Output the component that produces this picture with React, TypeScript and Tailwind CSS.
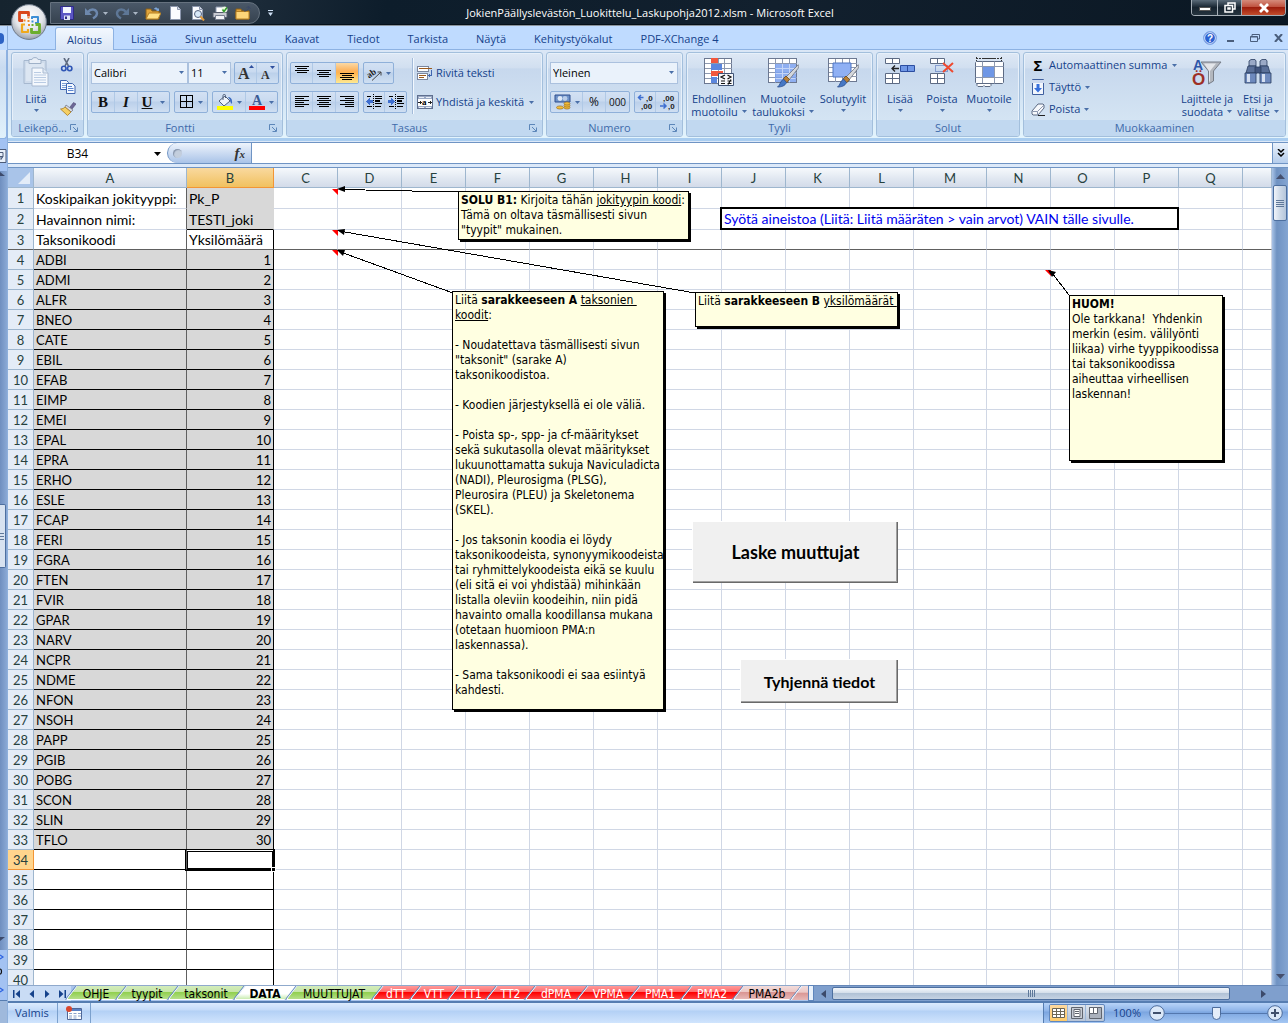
import { useState } from 'react';
import type { ReactNode } from 'react';

const UI_FONT = 'font-["Open_Sans","Noto_Sans",sans-serif]';
const CELL_FONT = 'font-[Lato,"Open_Sans",sans-serif]';
const NOTE_FONT = 'font-["DejaVu_Sans_Condensed","DejaVu_Sans",sans-serif]';

const MENU_TABS = ['Lisää', 'Sivun asettelu', 'Kaavat', 'Tiedot', 'Tarkista', 'Näytä', 'Kehitystyökalut', 'PDF-XChange 4'];

const COLUMNS = [
  { name: 'A', width: 'w-[153px]' },
  { name: 'B', width: 'w-[87px]' },
  { name: 'C', width: 'w-16' },
  { name: 'D', width: 'w-16' },
  { name: 'E', width: 'w-16' },
  { name: 'F', width: 'w-16' },
  { name: 'G', width: 'w-16' },
  { name: 'H', width: 'w-16' },
  { name: 'I', width: 'w-16' },
  { name: 'J', width: 'w-16' },
  { name: 'K', width: 'w-16' },
  { name: 'L', width: 'w-16' },
  { name: 'M', width: 'w-[73px]' },
  { name: 'N', width: 'w-16' },
  { name: 'O', width: 'w-16' },
  { name: 'P', width: 'w-16' },
  { name: 'Q', width: 'w-16' },
  { name: '', width: 'w-auto' },
];

const TAXA = [
  'ADBI', 'ADMI', 'ALFR', 'BNEO', 'CATE', 'EBIL', 'EFAB', 'EIMP', 'EMEI', 'EPAL',
  'EPRA', 'ERHO', 'ESLE', 'FCAP', 'FERI', 'FGRA', 'FTEN', 'FVIR', 'GPAR', 'NARV',
  'NCPR', 'NDME', 'NFON', 'NSOH', 'PAPP', 'PGIB', 'POBG', 'SCON', 'SLIN', 'TFLO',
];

const GREEN = 'bg-[linear-gradient(#d3ecbb,#c5e6a6_45%,#92d050_50%,#b5e08a)] text-black';
const RED = 'bg-[linear-gradient(#ff9a9a,#ff6b6b_45%,#fe0000_50%,#ff4040)] text-white';
const PINK = 'bg-[linear-gradient(#f2dcdb,#ecc8c6_45%,#da9694_50%,#e6b8b7)] text-black';

const SHEETS = [
  { name: 'OHJE', width: 'w-[50px]', look: GREEN },
  { name: 'tyypit', width: 'w-[52px]', look: GREEN },
  { name: 'taksonit', width: 'w-[66px]', look: GREEN },
  { name: 'DATA', width: 'w-[52px]', look: 'bg-[linear-gradient(#ffffff_60%,#c9ecb0)] text-black' },
  { name: 'MUUTTUJAT', width: 'w-[86px]', look: GREEN },
  { name: 'dTT', width: 'w-[38px]', look: RED },
  { name: 'VTT', width: 'w-[38px]', look: RED },
  { name: 'TT1', width: 'w-[38px]', look: RED },
  { name: 'TT2', width: 'w-[39px]', look: RED },
  { name: 'dPMA', width: 'w-[52px]', look: RED },
  { name: 'VPMA', width: 'w-[52px]', look: RED },
  { name: 'PMA1', width: 'w-[52px]', look: RED },
  { name: 'PMA2', width: 'w-[52px]', look: RED },
  { name: 'PMA2b', width: 'w-[58px]', look: PINK },
];

/* ---------- small building blocks ---------- */

function Caret({ className = 'text-[#4a6fa8]' }: { className?: string }) {
  return (
    <svg className={`w-[5px] h-[3px] shrink-0 ${className}`} viewBox="0 0 5 3" fill="currentColor">
      <path d="M0 0h5L2.5 3z" />
    </svg>
  );
}

function Group({ title, width, launcher, children }: { title: string; width: string; launcher?: boolean; children: ReactNode }) {
  return (
    <section
      className={`${width} flex flex-col rounded-[3px] border border-[#a3bfdc] overflow-hidden shadow-[inset_0_0_0_1px_#e7f0fa]
                  bg-[linear-gradient(#dee8f5,#d1dff0_18%,#c7d8ed_19%,#d8e8f5)]`}
    >
      <div className="flex-1 min-h-0">{children}</div>
      <div className="h-4 shrink-0 flex items-center bg-[#c1d8f0] text-[#3e6aaa] text-[11px] leading-4 px-[3px]">
        <h2 className="flex-1 text-center whitespace-nowrap">{title}</h2>
        {launcher && (
          <button aria-label={`${title}: lisää asetuksia`} className="w-2 h-2 mr-[2px]">
            <svg viewBox="0 0 8 8" className="w-2 h-2" fill="none" stroke="#5c86b9">
              <path d="M.5 6V.5H6M3 3l4 4M7.5 3.5v4h-4" />
            </svg>
          </button>
        )}
      </div>
    </section>
  );
}

function ButtonBox({ children, className = '' }: { children: ReactNode; className?: string }) {
  return (
    <div
      className={`flex h-[22px] rounded-[2px] border border-[#8fb0d9] divide-x divide-[#b0c9e6] overflow-hidden
                  bg-[linear-gradient(#d3e1f3,#c9daf0_45%,#bbd0ea_50%,#cfdff2)] ${className}`}
    >
      {children}
    </div>
  );
}

function Tool({ label, width, active, children }: { label: string; width: string; active?: boolean; children: ReactNode }) {
  return (
    <button
      aria-label={label}
      title={label}
      className={`${width} flex items-center justify-center gap-1 ${active ? 'bg-[linear-gradient(#fbd9a5,#fdb159_40%,#ffb54f_50%,#fee992)]' : ''}`}
    >
      {children}
    </button>
  );
}

function BigButton({ lines, width, caretBelow, children }: { lines: string[]; width: string; caretBelow?: boolean; children: ReactNode }) {
  return (
    <button className={`${width} flex flex-col items-center text-[#15428b] text-[11px] leading-[13px] shrink-0`}>
      <span className="h-8 mb-[3px]">{children}</span>
      {lines.map((line, i) => (
        <span key={line} className="flex items-center gap-1 whitespace-nowrap">
          {line}
          {!caretBelow && i === lines.length - 1 && <Caret />}
        </span>
      ))}
      {caretBelow && <span className="mt-1"><Caret /></span>}
    </button>
  );
}

function Lines({ rows }: { rows: [number, number][] }) {
  return (
    <svg className="w-4 h-4" viewBox="0 0 16 16" stroke="#000" shapeRendering="crispEdges">
      {rows.map(([x, w], i) => <path key={i} d={`M${x} ${2.5 + i * 2}h${w}`} />)}
    </svg>
  );
}

function ShortLines({ top }: { top: number }) {
  return (
    <svg className="w-4 h-4" viewBox="0 0 16 16" stroke="#000" shapeRendering="crispEdges">
      <path d={`M1 ${top + 0.5}h14M3 ${top + 2.5}h10M1 ${top + 4.5}h14M3 ${top + 6.5}h10`} />
    </svg>
  );
}

function Indent({ right }: { right?: boolean }) {
  return (
    <svg className="w-4 h-4" viewBox="0 0 16 16" shapeRendering="crispEdges">
      <path d="M7.5 0v16" stroke="#000" strokeDasharray="1 1" />
      <path d="M1 2.5h4M9 2.5h7M9 4.5h7M9 7h5M9 9.5h7M1 12.5h5M9 12.5h6" stroke="#000" strokeWidth="1.4" />
      <path d={right ? 'M0 6h3V4l4 3.5L3 11V9H0z' : 'M7 6H4V4L0 7.5 4 11V9h3z'} fill="#3f6fd0" />
    </svg>
  );
}

/* ---------- icons ---------- */

function OfficeButton() {
  return (
    <button aria-label="Office-painike" className="absolute left-[11px] top-1 w-9 h-9 z-20">
      <svg viewBox="0 0 36 36" className="w-9 h-9">
        <defs>
          <radialGradient id="orb" cx="50%" cy="35%" r="65%">
            <stop offset="0" stopColor="#ffffff" />
            <stop offset=".6" stopColor="#e4e6ea" />
            <stop offset="1" stopColor="#9aa1ad" />
          </radialGradient>
        </defs>
        <circle cx="18" cy="18" r="17.4" fill="url(#orb)" stroke="#6d7888" />
        <g fill="none" strokeLinejoin="round">
          <path d="M12 16.500H8.500V8.500h9v4" stroke="#d9481c" strokeWidth="2.800" />
          <path d="M12.500 16.500h2M17.500 13v1.500" stroke="#ee8a2c" strokeWidth="2" />
          <path d="M21 15v-2h6v6h-3" stroke="#3d8fd6" strokeWidth="2" />
          <path d="M14 20.500h-3v7.500h6v-3" stroke="#f0a91c" strokeWidth="2.200" />
          <path d="M20.500 24v4.500h8v-8h-4" stroke="#6cae2d" strokeWidth="2.800" />
        </g>
        <path d="M16.500 16h2v2h-2zM17 20h2v2h-2z" fill="#ee8a2c" />
        <path d="M20.500 16.500h2v2h-2z" fill="#3d8fd6" />
        <path d="M20.500 20h2v2h-2z" fill="#6cae2d" />
      </svg>
    </button>
  );
}

function SaveIcon() {
  return (
    <svg viewBox="0 0 14 14" className="w-[14px] h-[14px]">
      <path d="M.5.5h13v13h-12l-1-1z" fill="#5b56c4" stroke="#2f2b86" />
      <path d="M3 1h8v6H3z" fill="#f4f6ff" />
      <path d="M4 9.500h6V14H4z" fill="#dfe3f5" />
      <path d="M5 10.500h2V13H5z" fill="#2f2b86" />
    </svg>
  );
}

function UndoIcon({ flip }: { flip?: boolean }) {
  return (
    <svg viewBox="0 0 14 13" className={`w-[14px] h-[13px] ${flip ? '-scale-x-100' : ''}`}>
      <path d="M3 5c3-4 9-3 9 1.500 0 2-1.500 3.500-4 5" fill="none" stroke={flip ? '#5e7796' : '#6d88ad'} strokeWidth="2.4" />
      <path d="M0 1v7h7z" fill={flip ? '#5e7796' : '#6d88ad'} />
    </svg>
  );
}

function FolderIcon({ open }: { open?: boolean }) {
  return (
    <svg viewBox="0 0 16 14" className="w-4 h-[14px]">
      <path d="M1 13V3h5l1 2h7v8z" fill="#e0a43c" stroke="#8a5f17" />
      {open ? (
        <path d="M1 13l3-6h12l-3 6z" fill="#ffdf86" stroke="#b57f22" />
      ) : (
        <>
          <path d="M1 5.500h13V13H1z" fill="#fdd579" stroke="#b57f22" />
          <path d="M9 5c3 0 4-1 5-4M11.500 1.500L14 .5l1.500 2.500" fill="none" stroke="#3c4a66" />
        </>
      )}
      {open && <path d="M9 3c1-2 3-2 4 0l1-1v3h-3l1-1" fill="#7fa7d8" />}
    </svg>
  );
}

function PageIcon({ preview }: { preview?: boolean }) {
  return (
    <svg viewBox="0 0 15 15" className="w-[15px] h-[15px]">
      <path d="M2.500.5h7l3 3v10h-10z" fill="#fbfcff" stroke="#8c97ad" />
      <path d="M9.500.5v3h3" fill="#d6deec" stroke="#8c97ad" />
      {preview && (
        <>
          <circle cx="8" cy="8" r="3.500" fill="#d8e8f8" stroke="#55627d" />
          <path d="M10.500 10.500l3.500 4" stroke="#e09a3a" strokeWidth="2" />
        </>
      )}
    </svg>
  );
}

function PrinterIcon() {
  return (
    <svg viewBox="0 0 16 15" className="w-4 h-[15px]">
      <path d="M4 1h7v6H4z" fill="#fff" stroke="#8c97ad" />
      <path d="M1 6.500h14v5H1z" fill="#c8cbd2" stroke="#555c6b" />
      <path d="M3.500 9.500h9v4h-9z" fill="#f3f4f7" stroke="#777f8f" />
      <circle cx="12.500" cy="3.500" r="3" fill="#e8f6e0" />
      <path d="M10.500 3.500l1.500 2 3-4" stroke="#2f9a26" strokeWidth="1.5" fill="none" />
    </svg>
  );
}

function PasteIcon() {
  return (
    <svg viewBox="0 0 32 32" className="w-8 h-8">
      <path d="M4 3.500h22v23H4z" fill="#cfdcec" stroke="#a6b8cf" />
      <path d="M6 6h18v18H6z" fill="#dce6f2" />
      <path d="M9 2.500h3c0-2.500 6-2.500 6 0h3v4H9z" fill="#e9eff7" stroke="#9fb1c8" />
      <path d="M12 11h11l5 5v13H12z" fill="#f4f8fd" stroke="#a9bad1" />
      <path d="M23 11v5h5" fill="#dfe9f5" stroke="#a9bad1" />
      <path d="M14 15.500h7M14 18h12M14 20.500h12M14 23h12M14 25.500h12" stroke="#b9cbe3" />
    </svg>
  );
}

function ScissorsIcon() {
  return (
    <svg viewBox="0 0 14 14" className="w-[14px] h-[14px]" fill="none">
      <path d="M4 0l4.500 8M9 0L5 8" stroke="#5f6b80" strokeWidth="1.600" />
      <circle cx="3.800" cy="10.500" r="2.200" stroke="#2f56b5" strokeWidth="1.600" />
      <circle cx="9.700" cy="10.500" r="2.200" stroke="#2f56b5" strokeWidth="1.600" />
    </svg>
  );
}

function CopyIcon() {
  return (
    <svg viewBox="0 0 16 14" className="w-4 h-[14px]">
      <path d="M.5.5h6l2 2v7h-8z" fill="#f5f9ff" stroke="#4066b0" />
      <path d="M2 3.500h4M2 5.500h5M2 7.500h5" stroke="#7c9fd6" />
      <path d="M6.500 3.500h6l2.500 2.500v7.500H6.500z" fill="#f5f9ff" stroke="#4066b0" />
      <path d="M8 6.500h4M8 8.500h5.500M8 10.500h5.500" stroke="#5b86cf" />
    </svg>
  );
}

function BrushIcon() {
  return (
    <svg viewBox="0 0 16 14" className="w-4 h-[14px]">
      <path d="M10 5l3.500-4.500L16 2l-4 5z" fill="#6c6796" stroke="#4c4770" strokeWidth=".6" />
      <path d="M6 3l7 5-2 2-6-5z" fill="#d8dbe4" stroke="#6a6f80" strokeWidth=".7" />
      <path d="M5 5l6 5-3.500 3.500L.5 7c2 0 3.500-.8 4.500-2z" fill="#f5cf63" stroke="#a87b1e" strokeWidth=".8" />
    </svg>
  );
}

function BorderIcon() {
  return (
    <svg viewBox="0 0 14 14" className="w-[14px] h-[14px]" fill="none" stroke="#000" shapeRendering="crispEdges">
      <path d="M.5.5h12v12H.5zM6.500.5v12M.5 6.500h12" />
    </svg>
  );
}

function FillIcon() {
  return (
    <svg viewBox="0 0 16 16" className="w-4 h-4">
      <path d="M2 7l6-5 5 5-6 5z" fill="#eef3fa" stroke="#4f5f7a" />
      <path d="M6 6V1.500c0-1.500 2.500-1.500 2.500 0V4" fill="none" stroke="#4f5f7a" />
      <path d="M11 3c3 0 4.500 2 4 7-1.500-1-2-3-2-4z" fill="#3c6cc0" />
      <path d="M0 12h16v4H0z" fill="#ffff00" />
    </svg>
  );
}

function OrientationIcon() {
  return (
    <svg viewBox="0 0 16 20" className="w-4 h-5">
      <text x="1" y="13" fontSize="9" fontWeight="bold" fontFamily="Liberation Serif, serif" transform="rotate(-35 6 11)" fill="#222">ab</text>
      <path d="M6 17.500L15 9M11.500 9H15v3.500" stroke="#444" fill="none" />
    </svg>
  );
}

function WrapIcon() {
  return (
    <svg viewBox="0 0 16 16" className="w-4 h-4" fill="none" shapeRendering="crispEdges">
      <path d="M.5 1.500h11v5H.5z" fill="#fff" stroke="#7a869e" />
      <path d="M2 3.500h13" stroke="#9b5a1e" />
      <path d="M.5 8.500h10v6H.5z" fill="#fff" stroke="#7a869e" />
      <path d="M2 10.500h7M2 12.500h5" stroke="#9b5a1e" />
      <path d="M14.500 5v5.500h-2" stroke="#4066b0" />
      <path d="M13 8v5l-2.500-2.500z" fill="#4066b0" />
    </svg>
  );
}

function MergeIcon() {
  return (
    <svg viewBox="0 0 16 16" className="w-4 h-4" shapeRendering="crispEdges">
      <path d="M.5 1.500h15v13H.5z" fill="#9aa9c4" stroke="#5f6f8f" />
      <path d="M2 3h5M9 3h5M2 13.500h5M9 13.500h5" stroke="#e9eef7" />
      <path d="M1 5h14v7H1z" fill="#fff" />
      <path d="M1 8.500h4M3 7v3M11 8.500h4M13 7v3" stroke="#222" />
      <text x="5" y="11" fontSize="9" fontWeight="bold" fontFamily="Liberation Serif, serif">a</text>
    </svg>
  );
}

function CurrencyIcon() {
  return (
    <svg viewBox="0 0 17 16" className="w-[17px] h-4">
      <path d="M1 1h15v7H1z" fill="#6f93c9" stroke="#2f4f8e" />
      <circle cx="6" cy="4.500" r="2.400" fill="#dfe9f7" />
      <circle cx="11" cy="4.500" r="2.400" fill="#b9cdea" />
      <g fill="#f3bd3a" stroke="#8d621a" strokeWidth=".6">
        <ellipse cx="13" cy="13.500" rx="3" ry="1.600" />
        <ellipse cx="13" cy="11.500" rx="3" ry="1.600" />
        <ellipse cx="13" cy="9.500" rx="3" ry="1.600" />
        <ellipse cx="6" cy="13.500" rx="3.500" ry="1.600" />
      </g>
    </svg>
  );
}

function DecimalIcon({ more }: { more?: boolean }) {
  return (
    <svg viewBox="0 0 17 20" className="w-[17px] h-5" fontFamily="Liberation Sans, sans-serif" fontSize="8" fontWeight="bold" fill="#222">
      {more ? (
        <>
          <text x="9" y="9">,0</text>
          <text x="4" y="17">,00</text>
          <path d="M1 5.500h5.500M4 3L1.500 5.500 4 8" stroke="#3f6fd0" strokeWidth="1.500" fill="none" />
        </>
      ) : (
        <>
          <text x="4" y="9">,00</text>
          <text x="9" y="17">,0</text>
          <path d="M1 14h6M4.500 11.500L7 14l-2.500 2.500" stroke="#3f6fd0" strokeWidth="1.500" fill="none" />
        </>
      )}
    </svg>
  );
}

function TableBase({ x = 2, y = 2, w = 28, h = 25 }: { x?: number; y?: number; w?: number; h?: number }) {
  const sx = w / 4;
  const sy = h / 5;
  return (
    <g shapeRendering="crispEdges">
      <rect x={x + 0.5} y={y + 0.5} width={w} height={h} fill="#fff" stroke="#6c7891" />
      {[1, 2, 3].map(i => <path key={i} d={`M${x + sx * i + 0.5} ${y + 1}v${h}`} stroke="#8d99b0" />)}
      {[1, 2, 3, 4].map(i => <path key={i} d={`M${x + 1} ${y + sy * i + 0.5}h${w}`} stroke="#8d99b0" />)}
    </g>
  );
}

function PaintBrush() {
  return (
    <g>
      <path d="M31 8c1-1 1 2 0 3.500L22 23l-3-3z" fill="#d4d7dc" stroke="#6f747e" strokeWidth=".8" />
      <path d="M19 19l3.500 3.500L19.500 26 16 22z" fill="#b98036" stroke="#6d4715" strokeWidth=".8" />
      <path d="M16.500 22l3 3.500c-1.500 3.500-5 4.500-9 4.500 3-2 2.500-6 6-8z" fill="#4677c4" stroke="#2c4f8f" strokeWidth=".8" />
    </g>
  );
}

function ConditionalIcon() {
  return (
    <svg viewBox="0 0 32 32" className="w-8 h-8">
      <TableBase x={1} y={1} w={27} h={25} />
      <path d="M8 1h7v5H8zM8 14h12v5H8z" fill="#f2573d" />
      <path d="M8 7h11v6H8zM8 20h6v6H8z" fill="#5b86dd" />
      <path d="M15.500 16.500h15v12h-15z" fill="#f7f9fc" stroke="#3f5375" />
      <path d="M22 18l-4 2 4 2M18 24h4M18 26.500h4M24.500 18l3.500 2-3.500 2M24.500 24h4M24.500 26.500h4M28 22.500L25 27.500" fill="none" stroke="#111" strokeWidth="1.200" />
    </svg>
  );
}

function FormatTableIcon() {
  return (
    <svg viewBox="0 0 32 32" className="w-8 h-8">
      <TableBase x={1} y={1} w={28} h={24} />
      <path d="M8 7h21v18H8z" fill="#7ba1ee" opacity=".85" />
      <path d="M8.500 11.500h20M8.500 16.500h20M8.500 21.500h20M15.500 7v18M22.500 7v18" stroke="#c5d6f8" />
      <PaintBrush />
    </svg>
  );
}

function CellStylesIcon() {
  return (
    <svg viewBox="0 0 32 32" className="w-8 h-8">
      <TableBase x={1} y={1} w={28} h={23} />
      <path d="M6 6h18v14H6z" fill="#8fb0f4" stroke="#4f76c4" />
      <PaintBrush />
    </svg>
  );
}

function InsertIcon() {
  return (
    <svg viewBox="0 0 32 32" className="w-8 h-8">
      <path d="M1.500 1.500h14v5h-14zM8.500 1.500v5M1.500 16.500h14v10h-14zM1.500 21.500h14M8.500 16.500v10" fill="#fff" stroke="#5c6a83" />
      <path d="M16.500 8.500h14v6h-14zM23.500 8.500v6" fill="#6f97e6" stroke="#2b4da0" />
      <path d="M8 11.500h7M11 8.500l-3 3 3 3" fill="none" stroke="#222" strokeWidth="1.300" />
    </svg>
  );
}

function DeleteIcon() {
  return (
    <svg viewBox="0 0 32 32" className="w-8 h-8">
      <path d="M4.500 1.500h14v5h-14zM11.500 1.500v5M4.500 16.500h14v10h-14zM4.500 21.500h14M11.500 16.500v10" fill="#fff" stroke="#5c6a83" />
      <path d="M9.500 8.500h12v6h-12z" fill="none" stroke="#3d5fb0" strokeDasharray="1 1" />
      <path d="M17 6l10 9M27 6L17 15" stroke="#ee4a30" strokeWidth="2" />
    </svg>
  );
}

function FormatIcon() {
  return (
    <svg viewBox="0 0 32 32" className="w-8 h-8">
      <path d="M3 1.500h26M3.500 0v4M28.500 0v4" stroke="#333" strokeDasharray="2 1" />
      <path d="M11 1.500h10" stroke="#333" />
      <path d="M2.500 5.500l1-1h26l1 1v20l-1 1h-26l-1-1z" fill="#fff" stroke="#5c6a83" />
      <path d="M9.500 4.500v22M21.500 4.500v22M2.500 9.500h28M2.500 20.500h28" stroke="#8d99b0" />
      <path d="M10 10h11v10H10z" fill="#6f97e6" />
      <path d="M4 26.500h14v2l-1 1h-5l-1-1-1 1H5l-1-1z" fill="#fff" stroke="#5c6a83" />
    </svg>
  );
}

function SortIcon() {
  return (
    <svg viewBox="0 0 32 32" className="w-8 h-8" fontFamily="Liberation Sans, sans-serif" fontWeight="bold">
      <path d="M10 5h20l-7.500 9v10l-5 3V14z" fill="#b3b7be" stroke="#777d88" />
      <path d="M13 6.500h12l-6 7.500v10l-1 1V14z" fill="#e3e5e9" />
      <text x="2" y="13" fontSize="14" fill="#2f56a8">A</text>
      <text x="1" y="28" fontSize="17" fill="#9e2f26">Ö</text>
    </svg>
  );
}

function BinocularsIcon() {
  return (
    <svg viewBox="0 0 32 32" className="w-8 h-8" stroke="#2a3c60" strokeWidth=".8">
      <path d="M7 4l2-1.500h4l1 1.500v5H7zM18 4l2-1.500h4l1 1.500v5h-7z" fill="#9aa9c6" />
      <path d="M6 9h8l1 7H4zM18 9h8l2 7H17z" fill="#5a7099" />
      <path d="M13 10h6v6h-6z" fill="#42567f" />
      <path d="M3 16h11v10H3zM18 16h11v10H18z" fill="#6d89bd" />
      <path d="M5 17h3v8H5zM20 17h3v8h-3z" fill="#d5e0f2" stroke="none" />
    </svg>
  );
}

/* ---------- window parts ---------- */

function TitleBar() {
  return (
    <header className="relative z-10 h-[26px] shrink-0 flex items-start bg-[linear-gradient(100deg,#16242f,#1b2a38_20%,#0d1d2b_30%,#12202e_60%,#0a1723)] border-b border-[#8b949c] shadow-[inset_0_-1px_0_#05101a]">
      <OfficeButton />
      <div className="ml-[50px] mt-[2px] h-[22px] w-[210px] rounded-r-full bg-[linear-gradient(#4a5868,#36424f)] border border-[#66727f] flex items-center pl-[9px] gap-[7px]">
        <button aria-label="Tallenna" className="mr-1"><SaveIcon /></button>
        <button aria-label="Kumoa" className="flex items-center gap-1"><UndoIcon /><Caret className="text-[#aab6c4]" /></button>
        <button aria-label="Toista" className="flex items-center gap-1"><UndoIcon flip /><Caret className="text-[#aab6c4]" /></button>
        <button aria-label="Avaa"><FolderIcon open /></button>
        <button aria-label="Uusi"><PageIcon /></button>
        <button aria-label="Esikatselu"><PageIcon preview /></button>
        <button aria-label="Tulosta"><PrinterIcon /></button>
        <button aria-label="Sulje kansio"><FolderIcon /></button>
      </div>
      <button aria-label="Mukauta" className="mt-[10px] ml-[8px]">
        <svg viewBox="0 0 5 6" className="w-[5px] h-[6px]" fill="#cfe0f5"><path d="M0 0h5v1H0zM0 2.500h5L2.500 6z" /></svg>
      </button>
      <h1 className="flex-1 text-center text-white text-[11px] leading-[26px] pr-[164px] whitespace-nowrap">
        JokienPäällyslevästön_Luokittelu_Laskupohja2012.xlsm - Microsoft Excel
      </h1>
      <div className="flex h-4 mr-[2px] rounded-b-[4px] border border-t-0 border-[#a5aeb6] overflow-hidden divide-x divide-[#a5aeb6]">
        <button aria-label="Pienennä" className="w-[26px] flex justify-center items-end pb-1 bg-[linear-gradient(#5a6a78,#16232f_50%,#26343f)]">
          <span className="w-3 h-[4px] bg-white border border-[#555]" />
        </button>
        <button aria-label="Palauta" className="w-[24px] flex justify-center items-center bg-[linear-gradient(#5a6a78,#16232f_50%,#26343f)]">
          <svg viewBox="0 0 12 11" className="w-3 h-[11px]" fill="none" stroke="#fff" strokeWidth="1.500"><path d="M4 3V1h7v6H9M1 3.500h7.500V10H1zM4 6h2v1H4z" /></svg>
        </button>
        <button aria-label="Sulje" className="w-[43px] flex justify-center items-center bg-[linear-gradient(#d58b7b,#c05340_45%,#9c1d0c_50%,#c24c2c)]">
          <svg viewBox="0 0 12 10" className="w-3 h-[10px]"><path d="M2 1l8 8M10 1L2 9" stroke="#fff" strokeWidth="2.800" /></svg>
        </button>
      </div>
    </header>
  );
}

function BackWindow() {
  return (
    <div aria-hidden="true" className="w-2 shrink-0 flex flex-col bg-[#a3c2f2] border-r border-[#8eb0dc]">
      <div className="h-6 bg-[#bfdbff] flex items-center">
        <span className="w-1 h-[11px] rounded-r-full bg-[#2c62c4]" />
      </div>
      <div className="h-[89px] rounded-br-[3px] border-r border-b border-[#8db2e3] bg-[linear-gradient(#dbe7f6,#c9dbf0_20%,#e1f1fb)]" />
      <div className="h-8 flex flex-col justify-end pb-2">
        <svg viewBox="0 0 7 14" className="w-[7px] h-[14px]" fill="#e8f0fb" stroke="#4c5b78"><path d="M-2 .5h8v13h-8M-2 3.500h5v4h-5M1 7.500v3l2-3" /></svg>
      </div>
      <div className="flex-1 flex flex-col bg-[linear-gradient(90deg,#6f8fbf,#8aa9d5)] pt-[1px]">
        <svg viewBox="0 0 5 4" className="w-[5px] h-1" fill="#3c4a6b"><path d="M0 0l5 4H0z" /></svg>
        <div className="h-[328px]" />
        <div className="h-16 w-[6px] rounded-r-[2px] border border-l-0 border-[#4d6f9f] bg-[#d7e2f0] flex flex-col justify-center gap-[2px]">
          <span className="h-px w-1 bg-[#5f7899]" /><span className="h-px w-1 bg-[#5f7899]" /><span className="h-px w-1 bg-[#5f7899]" />
        </div>
        <div className="flex-1" />
        <svg viewBox="0 0 5 4" className="w-[5px] h-1 mb-[9px]" fill="#3c4a6b"><path d="M0 4l5-4H0z" /></svg>
      </div>
      <div className="h-[50px]">
        <svg viewBox="0 0 7 50" className="w-[7px] h-[50px]" fill="none" strokeWidth="1.200">
          <path d="M0 5l3 2-3 2M0 38l3 2-3 2" stroke="#2c62e0" />
          <path d="M0 19c2 0 2 5 0 5" stroke="#111" />
        </svg>
      </div>
      <div className="h-[23px] bg-[#9fb9dc] border-t border-[#567db1]" />
    </div>
  );
}

function MenuTabs() {
  return (
    <nav className="h-6 shrink-0 flex items-end gap-1 pl-[47px] bg-[#bfdbff] border-b border-[#8db2e3] text-[#15428b] text-[11px] leading-5">
      <button className="h-[23px] -mb-px px-[11px] pt-[2px] mr-px rounded-t-[3px] border border-b-0 border-[#8db2e3] bg-[linear-gradient(#f3f8fe,#dbe7f6)]">Aloitus</button>
      {MENU_TABS.map(tab => (
        <button key={tab} className="h-[23px] px-3 pt-[2px] whitespace-nowrap">{tab}</button>
      ))}
      <div className="flex-1" />
      <div className="flex items-center gap-[10px] h-[23px] pr-[5px] text-[#4a5e7c]">
        <button aria-label="Ohje">
          <svg viewBox="0 0 14 14" className="w-[14px] h-[14px]">
            <circle cx="7" cy="7" r="6.400" fill="#2c62d2" stroke="#86a9e4" />
            <circle cx="7" cy="7" r="5.400" fill="none" stroke="#fff" strokeWidth=".8" />
            <text x="7" y="10.500" fontSize="10" fontWeight="bold" textAnchor="middle" fill="#fff" fontFamily="Liberation Sans, sans-serif">?</text>
          </svg>
        </button>
        <button aria-label="Pienennä työkirja"><svg viewBox="0 0 8 8" className="w-2 h-2"><path d="M0 6h7v2H0z" fill="currentColor" /></svg></button>
        <button aria-label="Palauta työkirja" className="ml-[5px]"><svg viewBox="0 0 10 8" className="w-[10px] h-2" fill="none" stroke="currentColor"><path d="M2 2V.5h7.500V5H8M.5 2.500h7v5h-7zM.5 3h7" /></svg></button>
        <button aria-label="Sulje työkirja" className="ml-[4px]"><svg viewBox="0 0 9 8" className="w-[9px] h-2" stroke="currentColor" strokeWidth="2"><path d="M1 0l7 8M8 0L1 8" /></svg></button>
      </div>
    </nav>
  );
}

function RibbonSelect({ label, options, width }: { label: string; options: string[]; width: string }) {
  return (
    <div className={`relative ${width} h-[22px]`}>
      <select aria-label={label} className="block appearance-none w-full h-full pl-[2px] text-[11px] leading-5 text-black bg-[#eaf2fb] border border-[#abc1de]">
        {options.map(o => <option key={o}>{o}</option>)}
      </select>
      <span className="absolute right-1 top-[9px] pointer-events-none flex"><Caret /></span>
    </div>
  );
}

function Ribbon() {
  return (
    <div className="h-[91px] shrink-0 flex gap-[3px] pl-[3px] pr-[2px] pt-[2px] pb-px bg-[linear-gradient(#dbe7f6,#cbdcf0_30%,#e3f4fd)] border-b-[3px] border-[#a9cdf0]">
      <Group title="Leikepö..." width="w-[73px]" launcher>
        <div className="flex pt-1 pl-[8px]">
          <button className="w-8 flex flex-col items-center text-[#15428b] text-[11px] leading-[13px]">
            <PasteIcon />
            <span className="mt-[3px]">Liitä</span>
            <span className="mt-1"><Caret /></span>
          </button>
          <div className="flex flex-col gap-2 pl-2 pt-px">
            <button aria-label="Leikkaa"><ScissorsIcon /></button>
            <button aria-label="Kopioi"><CopyIcon /></button>
            <button aria-label="Muotoilusivellin"><BrushIcon /></button>
          </div>
        </div>
      </Group>

      <Group title="Fontti" width="w-[196px]" launcher>
        <div className="flex flex-col gap-[7px] pt-[9px] px-[3px]">
          <div className="flex">
            <RibbonSelect label="Fontti" options={['Calibri', 'Arial']} width="w-[97px]" />
            <RibbonSelect label="Fonttikoko" options={['11', '12']} width="w-[43px]" />
            <ButtonBox className="ml-[3px]">
              <Tool label="Suurenna fonttia" width="w-[22px]">
                <svg viewBox="0 0 16 18" className="w-4 h-[18px]"><text x="0" y="15" fontSize="16" fontWeight="bold" fontFamily="Liberation Serif, serif" fill="#333">A</text><path d="M11 4h5l-2.500-3z" fill="#2f4f9e" /></svg>
              </Tool>
              <Tool label="Pienennä fonttia" width="w-[21px]">
                <svg viewBox="0 0 16 18" className="w-4 h-[18px]"><text x="1" y="15" fontSize="12" fontWeight="bold" fontFamily="Liberation Serif, serif" fill="#333">A</text><path d="M10 2h5l-2.500 3z" fill="#2f4f9e" /></svg>
              </Tool>
            </ButtonBox>
          </div>
          <div className="flex gap-1 font-['Liberation_Serif',serif] text-[15px] leading-5 text-[#111]">
            <ButtonBox>
              <Tool label="Lihavointi" width="w-[23px]"><b>B</b></Tool>
              <Tool label="Kursivointi" width="w-[23px]"><b className="italic">I</b></Tool>
              <Tool label="Alleviivaus" width="w-[31px]"><b className="underline mr-1">U</b><Caret /></Tool>
            </ButtonBox>
            <ButtonBox>
              <Tool label="Reunat" width="w-[32px]"><BorderIcon /><Caret /></Tool>
            </ButtonBox>
            <ButtonBox>
              <Tool label="Täyttöväri" width="w-[33px]"><FillIcon /><Caret /></Tool>
              <Tool label="Fontin väri" width="w-[31px]">
                <svg viewBox="0 0 16 20" className="w-4 h-5"><text x="3" y="13" fontSize="14" fontWeight="bold" fontFamily="Liberation Serif, serif" fill="#3a5a94">A</text><path d="M0 14h16v4H0z" fill="#f00" /></svg>
                <Caret />
              </Tool>
            </ButtonBox>
          </div>
        </div>
      </Group>

      <Group title="Tasaus" width="w-[257px]" launcher>
        <div className="flex px-[3px] pt-[9px] gap-1">
          <div className="flex flex-col gap-[7px] w-[118px]">
            <div className="flex gap-1">
              <ButtonBox>
                <Tool label="Tasaa ylös" width="w-[22px]"><ShortLines top={1} /></Tool>
                <Tool label="Keskitä pystysuunnassa" width="w-[23px]"><ShortLines top={5} /></Tool>
                <Tool label="Tasaa alas" width="w-[22px]" active><ShortLines top={8} /></Tool>
              </ButtonBox>
              <ButtonBox>
                <Tool label="Suunta" width="w-[29px]"><OrientationIcon /><Caret /></Tool>
              </ButtonBox>
            </div>
            <div className="flex gap-1">
              <ButtonBox>
                <Tool label="Tasaa vasemmalle" width="w-[22px]"><Lines rows={[[1, 14], [1, 9], [1, 14], [1, 9], [1, 14], [1, 9]]} /></Tool>
                <Tool label="Keskitä" width="w-[23px]"><Lines rows={[[1, 14], [3, 10], [1, 14], [3, 10], [1, 14], [3, 10]]} /></Tool>
                <Tool label="Tasaa oikealle" width="w-[22px]"><Lines rows={[[1, 14], [6, 9], [1, 14], [6, 9], [1, 14], [6, 9]]} /></Tool>
              </ButtonBox>
              <ButtonBox>
                <Tool label="Pienennä sisennystä" width="w-[21px]"><Indent /></Tool>
                <Tool label="Lisää sisennystä" width="w-[21px]"><Indent right /></Tool>
              </ButtonBox>
            </div>
          </div>
          <div className="w-px h-14 -mt-1 bg-[#a3bbd9] shadow-[1px_0_0_#f2f8ff]" />
          <div className="flex flex-col gap-[7px] text-[#15428b] text-[11px] leading-[22px] whitespace-nowrap">
            <button className="flex items-center gap-[3px]"><WrapIcon />Rivitä teksti</button>
            <button className="flex items-center gap-[3px]"><MergeIcon />Yhdistä ja keskitä<span className="ml-[2px]"><Caret /></span></button>
          </div>
        </div>
      </Group>

      <Group title="Numero" width="w-[137px]" launcher>
        <div className="flex flex-col gap-[7px] pt-[9px] px-[3px]">
          <RibbonSelect label="Lukumuoto" options={['Yleinen', 'Luku', 'Valuutta']} width="w-[128px]" />
          <div className="flex gap-1 text-[12px] leading-5 text-[#111]">
            <ButtonBox>
              <Tool label="Valuutta" width="w-[32px]"><CurrencyIcon /><Caret /></Tool>
              <Tool label="Prosentti" width="w-[23px]">%</Tool>
              <Tool label="Tuhaterotin" width="w-[23px]"><span className="text-[10px]">000</span></Tool>
            </ButtonBox>
            <ButtonBox>
              <Tool label="Lisää desimaaleja" width="w-[21px]"><DecimalIcon more /></Tool>
              <Tool label="Vähennä desimaaleja" width="w-[22px]"><DecimalIcon /></Tool>
            </ButtonBox>
          </div>
        </div>
      </Group>

      <Group title="Tyyli" width="w-[187px]">
        <div className="flex pt-1 pl-px">
          <BigButton lines={['Ehdollinen', 'muotoilu']} width="w-[62px]"><ConditionalIcon /></BigButton>
          <BigButton lines={['Muotoile', 'taulukoksi']} width="w-[66px]"><FormatTableIcon /></BigButton>
          <BigButton lines={['Solutyylit']} width="w-[54px]" caretBelow><CellStylesIcon /></BigButton>
        </div>
      </Group>

      <Group title="Solut" width="w-[144px]">
        <div className="flex pt-1 pl-[2px]">
          <BigButton lines={['Lisää']} width="w-[42px]" caretBelow><InsertIcon /></BigButton>
          <BigButton lines={['Poista']} width="w-[42px]" caretBelow><DeleteIcon /></BigButton>
          <BigButton lines={['Muotoile']} width="w-[52px]" caretBelow><FormatIcon /></BigButton>
        </div>
      </Group>

      <Group title="Muokkaaminen" width="flex-1 min-w-0">
        <div className="flex">
          <div className="flex flex-col flex-1 pt-px pl-[7px] text-[#15428b] text-[11px] leading-[22px] whitespace-nowrap">
            <button className="flex items-center gap-1"><span className="w-[14px] text-[15px] font-bold text-black">Σ</span>Automaattinen summa<span className="ml-px"><Caret /></span></button>
            <button className="flex items-center gap-1">
              <svg viewBox="0 0 14 16" className="w-[14px] h-4">
                <path d="M1.500.5h11v15h-11z" fill="#f2f6fd" stroke="#3f5f9f" />
                <path d="M1 1h12v3H1z" fill="#cdd9ee" />
                <path d="M5.500 5h3v4H11l-4 4.500L3 9h2.500z" fill="#3870dc" />
              </svg>
              Täyttö<Caret />
            </button>
            <button className="flex items-center gap-1">
              <svg viewBox="0 0 14 14" className="w-[14px] h-[14px]">
                <path d="M1 9l6-7h5l1 1v3l-6 7H2L1 12z" fill="#f7f9fc" stroke="#5c6a83" />
                <path d="M1.500 9.500h5L13 3M6.500 9.500V13" fill="none" stroke="#8d99b0" />
                <path d="M7 13.500h7" stroke="#222" />
              </svg>
              Poista<Caret />
            </button>
          </div>
          <div className="flex pt-1 pr-1">
            <BigButton lines={['Lajittele ja', 'suodata']} width="w-[56px]"><SortIcon /></BigButton>
            <BigButton lines={['Etsi ja', 'valitse']} width="w-[46px]"><BinocularsIcon /></BigButton>
          </div>
        </div>
      </Group>
    </div>
  );
}

function FormulaBar() {
  const [name, setName] = useState('B34');
  const [formula, setFormula] = useState('');
  return (
    <div className="h-[27px] shrink-0 flex pt-px border-b border-[#6f94c4] bg-[#dce9f9] text-[12px]">
      <div className="flex-1 h-[22px] flex bg-white border-y border-[#6f94c4]">
        <div className="relative w-[159px]">
          <input aria-label="Nimiruutu" value={name} onChange={e => setName(e.target.value)} className="w-full h-full pr-[20px] text-center" />
          <svg viewBox="0 0 7 4" className="absolute right-[6px] top-[9px] w-[7px] h-1"><path d="M0 0h7L3.500 4z" /></svg>
        </div>
        <div className="w-[85px] rounded-l-full border-l border-r border-[#6f94c4] bg-[linear-gradient(#eef4fc,#a9c3e8)] flex items-center justify-between pl-[5px] pr-[6px]">
          <span className="w-[9px] h-[9px] rounded-full bg-[#c3cedd] shadow-[inset_1px_1px_1px_#8796ac]" />
          <button aria-label="Lisää funktio" className="font-['Liberation_Serif',serif] italic font-bold text-[15px] leading-4 text-[#333]">
            f<span className="text-[11px]">x</span>
          </button>
        </div>
        <input aria-label="Kaavarivi" value={formula} onChange={e => setFormula(e.target.value)} className="flex-1 min-w-0 px-1" />
        <button aria-label="Laajenna kaavarivi" className="w-4 border-l border-[#6f94c4] bg-[linear-gradient(#eaf2fc,#b5cdec)] flex items-center justify-center">
          <svg viewBox="0 0 8 8" className="w-2 h-2" fill="none" stroke="#000" strokeWidth="1.500"><path d="M1 0l3 3 3-3M1 4l3 3 3-3" /></svg>
        </button>
      </div>
    </div>
  );
}

function cellBorder(row: number, col: string) {
  if (col === 'A') {
    if (row < 3) return 'border-r-[#606060] border-b-[#d0d7e5]';
    return row === 3 ? 'border-r-[#606060] border-b-[#606060]' : 'border-r-[#606060] border-b-black';
  }
  if (col === 'B') {
    if (row === 1) return 'border-[#d8d8d8]';
    if (row === 2) return 'border-r-[#d8d8d8] border-b-black';
    return row === 3 ? 'border-r-black border-b-[#606060]' : 'border-black';
  }
  return row === 3 ? 'border-r-[#d0d7e5] border-b-[#606060]' : 'border-[#d0d7e5]';
}

function cellValue(row: number, col: string) {
  if (col !== 'A' && col !== 'B') return '';
  const head = [['Koskipaikan jokityyppi:', 'Pk_P'], ['Havainnon nimi:', 'TESTI_joki'], ['Taksonikoodi', 'Yksilömäärä']];
  if (row <= 3) return head[row - 1][col === 'A' ? 0 : 1];
  if (row > TAXA.length + 3) return '';
  return col === 'A' ? TAXA[row - 4] : String(row - 3);
}

function isShaded(row: number, col: string) {
  if (col === 'A') return row >= 4 && row <= 33;
  return col === 'B' && row !== 3 && row <= 33;
}

function Sheet() {
  const rows = Array.from({ length: 40 }, (_, i) => i + 1);
  return (
    <table className={`w-full table-fixed border-separate border-spacing-0 ${CELL_FONT} text-[13px] leading-[17px] text-black`}>
      <colgroup>
        <col className="w-[26px]" />
        {COLUMNS.map((c, i) => <col key={i} className={c.width} />)}
      </colgroup>
      <thead>
        <tr className="h-5">
          <th className="h-5 p-0 border-r border-b border-[#9eb6ce] bg-[#a9c4e9]" aria-label="Valitse kaikki">
            <svg viewBox="0 0 25 19" className="w-[25px] h-[19px]"><path d="M22 4v12H10z" fill="#e3ecf8" /></svg>
          </th>
          {COLUMNS.map((c, i) => (
            <th
              key={i}
              scope="col"
              className={`h-5 p-0 pt-[2px] font-normal text-[#27413e] border-r border-b ${
                c.name === 'B'
                  ? 'border-[#f29536] bg-[linear-gradient(#f9d99f,#f1c15f)]'
                  : 'border-[#9eb6ce] bg-[linear-gradient(#f6f9fc,#dfe6f0_60%,#d3dbe9)]'
              }`}
            >
              {c.name}
            </th>
          ))}
        </tr>
      </thead>
      <tbody>
        {rows.map(row => (
          <tr key={row}>
            <th
              scope="row"
              className={`${row < 3 ? 'h-[21px] pt-px' : 'h-5 pt-[2px]'} px-0 pb-0 font-normal text-[#27413e] border-r border-b ${
                row === 34 ? 'border-[#f29536] bg-[#ffd58d]' : 'border-[#9eb6ce] bg-[#e4ecf7]'
              } ${row === 3 ? 'border-b-[#606060]' : ''}`}
            >
              {row}
            </th>
            {COLUMNS.map((c, i) => (
              <td
                key={i}
                className={`px-[2px] pb-0 border-r border-b whitespace-nowrap ${cellBorder(row, c.name)} ${
                  isShaded(row, c.name) ? 'bg-[#d8d8d8]' : 'bg-white'
                } ${c.name === 'B' && row > 3 ? 'text-right' : ''} ${row < 4 ? 'pt-0 text-[14px]' : 'pt-[2px]'}`}
              >
                {cellValue(row, c.name)}
              </td>
            ))}
          </tr>
        ))}
      </tbody>
    </table>
  );
}

function Note({ place, children }: { place: string; children: ReactNode }) {
  return (
    <div className={`absolute ${place} ${NOTE_FONT} border border-black bg-[#ffffe1] shadow-[2px_2px_0_#000] px-[2px] pt-px text-[12px] leading-[15px] text-black whitespace-nowrap`}>
      {children}
    </div>
  );
}

// Comments, arrows and form buttons float over the cells
function Drawings() {
  return (
    <>
      <svg className="absolute left-0 top-0 w-[1264px] h-[320px] pointer-events-none" viewBox="0 0 1264 320">
        <g fill="#f00"><path d="M324 21h6v6zM324 62h6v6zM324 82h6v6zM1037 102h6v6z" /></g>
        <g stroke="#000" shapeRendering="crispEdges">
          <path d="M334 21.500L450 24M334 63.500L687 125M334 84.500L445 125M1044 105L1061 127" />
        </g>
        <path d="M329 21l8-3v6zM329 62l8-1-1 6zM329 82l8 0-2 6zM1040 102l8 2-4 5z" />
      </svg>

      <Note place="left-[450px] top-[23px] w-[231px] h-[49px]">
        <p><b>SOLU B1:</b> Kirjoita tähän <u>jokityypin koodi</u>:</p>
        <p>Tämä on oltava täsmällisesti sivun<br />"tyypit" mukainen.</p>
      </Note>

      <div className={`absolute left-[712px] top-[39px] w-[459px] h-[23px] border-2 border-black bg-white px-[2px] ${CELL_FONT} text-[14px] leading-5 text-[#0000ee] whitespace-nowrap`}>
        Syötä aineistoa (Liitä: Liitä määräten &gt; vain arvot) VAIN tälle sivulle.
      </div>

      <Note place="left-[687px] top-[124px] w-[203px] h-[35px]">
        Liitä <b>sarakkeeseen B</b> <u>yksilömäärät&nbsp;</u>
      </Note>

      <Note place="left-[444px] top-[123px] w-[212px] h-[419px]">
        <p>Liitä <b>sarakkeeseen A</b> <u>taksonien&nbsp;</u><br /><u>koodit</u>:</p>
        <p className="mt-[15px]">- Noudatettava täsmällisesti sivun<br />"taksonit" (sarake A)<br />taksonikoodistoa.</p>
        <p className="mt-[15px]">- Koodien järjestyksellä ei ole väliä.</p>
        <p className="mt-[15px]">
          - Poista sp-, spp- ja cf-määritykset<br />sekä sukutasolla olevat määritykset<br />lukuunottamatta sukuja Naviculadicta<br />
          (NADI), Pleurosigma (PLSG),<br />Pleurosira (PLEU) ja Skeletonema<br />(SKEL).
        </p>
        <p className="mt-[15px]">
          - Jos taksonin koodia ei löydy<br />taksonikoodeista, synonyymikoodeista<br />tai ryhmittelykoodeista eikä se kuulu<br />
          (eli sitä ei voi yhdistää) mihinkään<br />listalla oleviin koodeihin, niin pidä<br />havainto omalla koodillansa mukana<br />
          (otetaan huomioon PMA:n<br />laskennassa).
        </p>
        <p className="mt-[15px]">- Sama taksonikoodi ei saa esiintyä<br />kahdesti.</p>
      </Note>

      <Note place="left-[1061px] top-[127px] w-[154px] h-[166px]">
        <p><b>HUOM!</b></p>
        <p>
          Ole tarkkana!&nbsp; Yhdenkin<br />merkin (esim. välilyönti<br />liikaa) virhe tyyppikoodissa<br />tai taksonikoodissa<br />aiheuttaa virheellisen<br />laskennan!
        </p>
      </Note>

      <button className={`absolute left-[684px] top-[353px] w-[206px] h-[62px] bg-[#f0f0f0] border-t border-l border-white shadow-[inset_-1px_-1px_0_#696969,inset_-2px_-2px_0_#a0a0a0] ${CELL_FONT} font-bold text-[18px] text-black`}>
        Laske muuttujat
      </button>
      <button className={`absolute left-[732px] top-[491px] w-[158px] h-11 bg-[#f0f0f0] border-t border-l border-white shadow-[inset_-1px_-1px_0_#696969,inset_-2px_-2px_0_#a0a0a0] ${CELL_FONT} font-bold text-[16px] text-black`}>
        Tyhjennä tiedot
      </button>

      {/* selected cell B34 */}
      <div className="absolute left-[177px] top-[681px] w-[90px] h-[22px] border-[3px] border-double border-black pointer-events-none" />
      <div className="absolute left-[263px] top-[699px] w-[5px] h-[5px] bg-black border border-white pointer-events-none" />
    </>
  );
}

function VerticalScroll() {
  return (
    <div className="w-4 shrink-0 flex flex-col items-center bg-[linear-gradient(90deg,#a9c3e6,#6f92c2_30%,#84a5d2)]">
      <button aria-label="Vieritä ylös" className="h-[17px] flex items-center">
        <svg viewBox="0 0 9 5" className="w-[9px] h-[5px]" fill="#45506e"><path d="M0 5h9L4.500 0z" /></svg>
      </button>
      <div className="w-[14px] h-9 rounded-[2px] border border-[#4d6f9f] bg-[linear-gradient(90deg,#f0f4fa,#cdd9e8_50%,#b5c6db)] flex flex-col items-center justify-center gap-px">
        <span className="w-2 h-px bg-[#5f7899]" /><span className="w-2 h-px bg-[#5f7899]" /><span className="w-2 h-px bg-[#5f7899]" /><span className="w-2 h-px bg-[#5f7899]" />
      </div>
      <div className="flex-1" />
      <button aria-label="Vieritä alas" className="h-[17px] flex items-center">
        <svg viewBox="0 0 9 5" className="w-[9px] h-[5px]" fill="#45506e"><path d="M0 0h9L4.500 5z" /></svg>
      </button>
    </div>
  );
}

function SheetTabs() {
  return (
    <div className={`h-4 shrink-0 flex bg-[#7f9fcd] ${NOTE_FONT}`}>
      <div className="w-5/8 flex overflow-hidden bg-[#a9c4ec] border-t border-[#8fa9cc]">
        <div className="w-[63px] shrink-0 flex items-center justify-around px-[2px] bg-[#c9dcf5] text-[#15428b]">
          <button aria-label="Ensimmäinen taulukko"><svg viewBox="0 0 8 8" className="w-2 h-2" fill="currentColor"><path d="M0 0h1.500v8H0zM7 0v8L2.500 4z" /></svg></button>
          <button aria-label="Edellinen taulukko"><svg viewBox="0 0 8 8" className="w-2 h-2" fill="currentColor"><path d="M6 0v8L1.500 4z" /></svg></button>
          <button aria-label="Seuraava taulukko"><svg viewBox="0 0 8 8" className="w-2 h-2" fill="currentColor"><path d="M2 0v8l4.500-4z" /></svg></button>
          <button aria-label="Viimeinen taulukko"><svg viewBox="0 0 8 8" className="w-2 h-2" fill="currentColor"><path d="M6.500 0H8v8H6.500zM1 0v8l4.500-4z" /></svg></button>
        </div>
        {SHEETS.map(s => {
          const selected = s.name === 'DATA';
          const [bg, ink] = s.look.split(' ');
          return (
            <button key={s.name} className={`relative ${s.width} shrink-0 h-[14px] ${ink} ${selected ? 'font-bold' : ''} text-[12px] leading-4`}>
              <span className={`absolute inset-0 -skew-x-[38deg] border-l border-b border-white shadow-[-1px_0_0_#5f86bd] rounded-b-[2px] ${bg}`} />
              <span className="relative">{s.name}</span>
            </button>
          );
        })}
        <span className="shrink-0 w-5 h-[14px] -skew-x-[38deg] border-l border-white shadow-[-1px_0_0_#5f86bd] bg-[linear-gradient(#f2dcdb,#ecc8c6_45%,#da9694_50%,#e6b8b7)]" />
      </div>
      <div className="w-[6px] border border-[#5f86bd] bg-[#e9f1fb]" />
      <div className="flex-1 flex items-center bg-[#7f9fcd] border-t border-[#6788b8]">
        <button aria-label="Vieritä vasemmalle" className="w-[18px] flex justify-center">
          <svg viewBox="0 0 5 8" className="w-[5px] h-2" fill="#3c4a6b"><path d="M5 0v8L0 4z" /></svg>
        </button>
        <div className="flex-1 h-[13px] rounded-[2px] border border-[#4d6f9f] bg-[linear-gradient(#f4f7fb,#d4deea_45%,#b1c2d6_50%,#c6d3e3)] flex items-center justify-center gap-px">
          <span className="w-px h-[7px] bg-[#5f7899]" /><span className="w-px h-[7px] bg-[#5f7899]" /><span className="w-px h-[7px] bg-[#5f7899]" /><span className="w-px h-[7px] bg-[#5f7899]" />
        </div>
        <button aria-label="Vieritä oikealle" className="w-[42px] flex justify-end pr-[6px] mr-4">
          <svg viewBox="0 0 5 8" className="w-[5px] h-2" fill="#3c4a6b"><path d="M0 0v8l5-4z" /></svg>
        </button>
      </div>
    </div>
  );
}

function StatusBar() {
  const [zoom, setZoom] = useState(100);
  return (
    <footer className="h-[22px] shrink-0 flex items-center border-t-2 border-[#567db1] bg-[linear-gradient(#dcebfe,#c4dbf9_35%,#b3d0f5_40%,#d0e4fd)] text-[#15428b] text-[11px]">
      <span className="w-[49px] pl-[7px]">Valmis</span>
      <div className="h-full w-[34px] flex items-center justify-center border-x border-[#7ba0cd]">
        <button aria-label="Tallenna makro">
          <svg viewBox="0 0 16 14" className="w-4 h-[14px]">
            <path d="M1.500 2.500h14v11h-14z" fill="#fff" stroke="#4f6797" />
            <path d="M2 3h13v2H2z" fill="#5b80c4" />
            <path d="M3 7.500h3M7.500 7.500h3M12 7.500h3M3 10h3M7.500 10h3M12 10h3M3 12h3M7.500 12h3" stroke="#8aa2cc" />
            <circle cx="3" cy="3" r="3" fill="#d9472e" />
          </svg>
        </button>
      </div>
      <div className="flex-1" />
      <div className="h-full w-[245px] flex items-center pl-[5px] border-l border-[#567db1] bg-[linear-gradient(#b7d3f8,#8db3e8_40%,#7ba5e0_45%,#a5c7f3)]">
        <div className="flex h-[18px] border border-[#5f86bd] rounded-[2px] divide-x divide-[#9db8da] bg-[linear-gradient(#dde4ee,#b8c4d6)] overflow-hidden">
          <button aria-label="Normaali" className="w-[18px] flex items-center justify-center bg-[linear-gradient(#fdd9a0,#ffcb69)]">
            <svg viewBox="0 0 13 11" className="w-[13px] h-[11px]" fill="#fff" stroke="#6b6555"><path d="M.5.5h12v9H.5zM4.500.5v9M8.500.5v9M.5 3.500h12M.5 6.500h12" /></svg>
          </button>
          <button aria-label="Sivun asettelu" className="w-[18px] flex items-center justify-center">
            <svg viewBox="0 0 12 12" className="w-3 h-3" fill="#fff" stroke="#60656f"><path d="M.5.5h11v11H.5z" fill="#c7ccd5" /><path d="M3 2.500h6v7H3zM4 4.500h4M4 6.500h4" /></svg>
          </button>
          <button aria-label="Sivunvaihdot" className="w-[18px] flex items-center justify-center">
            <svg viewBox="0 0 13 12" className="w-[13px] h-3" fill="#aab1bd" stroke="#60656f"><path d="M.5.500h12v11H.5z" /><path d="M.5.5h4v6h-4zM4.500.5h4v6h-4z" fill="#fff" /></svg>
          </button>
        </div>
        <button className="w-[44px] text-center whitespace-nowrap">{zoom}%</button>
        <button aria-label="Loitonna" onClick={() => setZoom(zoom - 10)}>
          <svg viewBox="0 0 16 16" className="w-4 h-4"><circle cx="8" cy="8" r="7.300" fill="#dbe8f8" stroke="#4c6c9c" /><path d="M4 8h8" stroke="#3f4f6c" strokeWidth="2" /></svg>
        </button>
        <input
          type="range"
          aria-label="Zoomaus"
          min={0}
          max={200}
          value={zoom}
          onChange={e => setZoom(Number(e.target.value))}
          className="appearance-none flex-1 min-w-0 h-[13px] bg-[linear-gradient(#5377ae,#5377ae)] bg-[length:100%_1px] bg-center bg-no-repeat
                     [&::-webkit-slider-thumb]:appearance-none [&::-webkit-slider-thumb]:w-[9px] [&::-webkit-slider-thumb]:h-[13px]
                     [&::-webkit-slider-thumb]:border [&::-webkit-slider-thumb]:border-[#4c6c9c] [&::-webkit-slider-thumb]:bg-[#e4edf9]
                     [&::-webkit-slider-thumb]:rounded-b-full"
        />
        <button aria-label="Lähennä" className="mr-[5px]" onClick={() => setZoom(zoom + 10)}>
          <svg viewBox="0 0 16 16" className="w-4 h-4"><circle cx="8" cy="8" r="7.300" fill="#dbe8f8" stroke="#4c6c9c" /><path d="M4 8h8M8 4v8" stroke="#3f4f6c" strokeWidth="2" /></svg>
        </button>
      </div>
    </footer>
  );
}

export default function App() {
  return (
    <div className={`h-screen flex flex-col overflow-hidden ${UI_FONT}`}>
      <TitleBar />
      <div className="flex-1 min-h-0 flex">
        <BackWindow />
        <main className="flex-1 min-w-0 flex flex-col">
          <MenuTabs />
          <Ribbon />
          <FormulaBar />
          <div className="flex-1 min-h-0 flex">
            <div className="relative flex-1 min-w-0 overflow-hidden bg-white">
              <Sheet />
              <Drawings />
            </div>
            <VerticalScroll />
          </div>
          <SheetTabs />
          <StatusBar />
        </main>
      </div>
    </div>
  );
}
